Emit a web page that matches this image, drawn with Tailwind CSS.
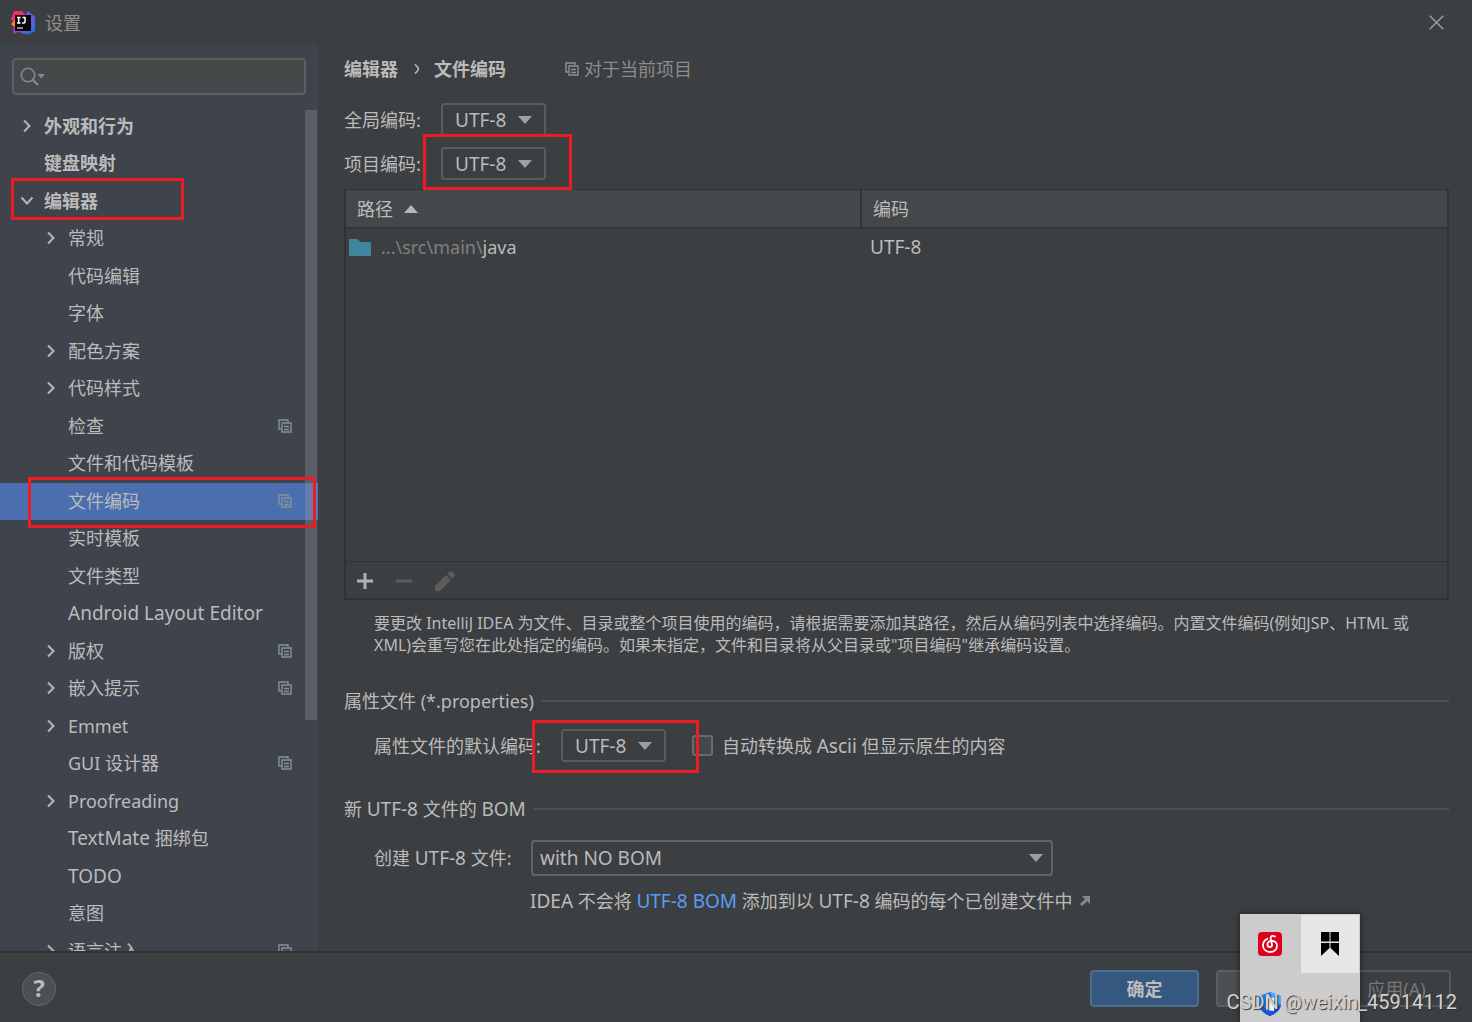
<!DOCTYPE html>
<html lang="zh-CN">
<head>
<meta charset="utf-8">
<title>设置</title>
<meta name="viewport" content="width=device-width, initial-scale=1">
<script src="https://cdn.jsdelivr.net/npm/@tailwindcss/browser@4"></script>
</head>
<body class="flex h-screen flex-col overflow-hidden bg-[#3c3f41] font-['Noto_Sans','Noto_Sans_CJK_SC',sans-serif] text-[18px] leading-6 text-[#bbbbbb]">

<svg class="hidden" aria-hidden="true">
  <symbol id="copy" viewBox="0 0 14 14"><path d="M10 3V1H1v9h2M4 4h9v9H4zM6 7.500h5M6 10.500h5" fill="none" stroke="currentColor" stroke-width="1.400"/></symbol>
  <symbol id="right" viewBox="0 0 10 14"><path d="M2 1.500 7.500 7 2 12.500" fill="none" stroke="#b4b8bb" stroke-width="2"/></symbol>
  <symbol id="down" viewBox="0 0 14 8"><path d="M0 0H14L7 8Z" fill="#9da0a3"/></symbol>
</svg>

<header class="flex h-[43px] shrink-0 items-center pt-0.5 pr-7 pl-[11px]">
  <svg class="h-6 w-6" viewBox="0 0 24 24" aria-hidden="true">
    <defs>
      <linearGradient id="ga" x1="0" y1="0" x2="1" y2="1"><stop offset="0" stop-color="#fe2857"/><stop offset="1" stop-color="#e0338c"/></linearGradient>
      <linearGradient id="gb" x1="0" y1="0" x2="1" y2="1"><stop offset="0" stop-color="#2f6df5"/><stop offset=".5" stop-color="#7a52d8"/><stop offset="1" stop-color="#087cfa"/></linearGradient>
    </defs>
    <path d="M3 0H11L15 5V14H4L0 8Z" fill="url(#ga)"/>
    <path d="M0 13 4 9V17Z" fill="#fc801d"/>
    <path d="M3 15 12 19 2 23Z" fill="#b13bc4"/>
    <path d="M17 0 24 6V20L17 23.500 10 22 7 19 14 4Z" fill="url(#gb)"/>
    <rect x="4" y="4" width="16" height="16" fill="#080808"/>
    <path d="M6 6.500H9.500M7.700 6.500V12M6 12H9.500M11.500 6.500H14V11Q14 12 12.800 12H11" stroke="#fff" stroke-width="1.500" fill="none"/>
    <path d="M6 17H12" stroke="#ccc" stroke-width="1.300"/>
  </svg>
  <h1 class="ml-2.5 flex-1 text-[#8f8f8f]">设置</h1>
  <button aria-label="关闭"><svg class="h-[15px] w-[15px]" viewBox="0 0 15 15"><path d="M.7.700 14.300 14.300M14.300.700.700 14.300" stroke="#a0a0a0" stroke-width="1.400"/></svg></button>
</header>

<div class="flex min-h-0 flex-1">
  <aside class="relative flex w-[318px] shrink-0 flex-col overflow-hidden bg-[#3f434c] pt-[15px]">
    <div class="relative mr-3 ml-3">
      <svg class="absolute top-[9px] left-2 h-5 w-7" viewBox="0 0 28 20" aria-hidden="true"><circle cx="8" cy="8" r="6.700" fill="none" stroke="#7f8b91" stroke-width="1.600"/><path d="M12.500 12.500 18 18" stroke="#7f8b91" stroke-width="2.200"/><path d="M17.500 7H25L21.200 11.500Z" fill="#7f8b91"/></svg>
      <input type="text" aria-label="搜索" class="block h-[37px] w-full rounded-[4px] border-2 border-[#5c6062] bg-[#454949] pr-2 pl-10 outline-none">
    </div>
    <ul class="mt-[13px] min-h-0 flex-1 overflow-hidden [&>li]:pb-0.5">
      <li class="flex items-center pl-[22px] font-bold odd:h-[37px] even:h-[38px]"><svg class="mr-3 h-3.5 w-2.5"><use href="#right"/></svg>外观和行为</li>
      <li class="flex items-center pl-11 font-bold odd:h-[37px] even:h-[38px]">键盘映射</li>
      <li class="relative flex items-center pl-5 font-bold odd:h-[37px] even:h-[38px]"><svg class="mr-2.5 h-2.5 w-3.5" viewBox="0 0 14 10"><path d="M1.500 1.500 7 7.500 12.500 1.500" fill="none" stroke="#b4b8bb" stroke-width="2"/></svg>编辑器<span class="absolute -top-[5px] left-[11px] h-[42px] w-[173px] border-3 border-[#ed1c24]"></span></li>
      <li class="flex items-center pl-[46px] odd:h-[37px] even:h-[38px]"><svg class="mr-3 h-3.5 w-2.5"><use href="#right"/></svg>常规</li>
      <li class="flex items-center pl-[68px] odd:h-[37px] even:h-[38px]">代码编辑</li>
      <li class="flex items-center pl-[68px] odd:h-[37px] even:h-[38px]">字体</li>
      <li class="flex items-center pl-[46px] odd:h-[37px] even:h-[38px]"><svg class="mr-3 h-3.5 w-2.5"><use href="#right"/></svg>配色方案</li>
      <li class="flex items-center pl-[46px] odd:h-[37px] even:h-[38px]"><svg class="mr-3 h-3.5 w-2.5"><use href="#right"/></svg>代码样式</li>
      <li class="flex items-center pr-[26px] pl-[68px] odd:h-[37px] even:h-[38px]">检查<svg class="ml-auto h-3.5 w-3.5 text-[#87939a]"><use href="#copy"/></svg></li>
      <li class="flex items-center pl-[68px] odd:h-[37px] even:h-[38px]">文件和代码模板</li>
      <li class="relative flex items-center bg-[#4b6eaf] pr-[26px] pl-[68px] odd:h-[37px] even:h-[38px]">文件编码<svg class="ml-auto h-3.5 w-3.5 text-[#87939a]"><use href="#copy"/></svg><span class="absolute -top-1.5 left-7 z-10 h-[51px] w-[288px] border-3 border-[#ed1c24]"></span></li>
      <li class="flex items-center pl-[68px] odd:h-[37px] even:h-[38px]">实时模板</li>
      <li class="flex items-center pl-[68px] odd:h-[37px] even:h-[38px]">文件类型</li>
      <li class="flex items-center pl-[68px] text-[19px] odd:h-[37px] even:h-[38px]">Android Layout Editor</li>
      <li class="flex items-center pr-[26px] pl-[46px] odd:h-[37px] even:h-[38px]"><svg class="mr-3 h-3.5 w-2.5"><use href="#right"/></svg>版权<svg class="ml-auto h-3.5 w-3.5 text-[#87939a]"><use href="#copy"/></svg></li>
      <li class="flex items-center pr-[26px] pl-[46px] odd:h-[37px] even:h-[38px]"><svg class="mr-3 h-3.5 w-2.5"><use href="#right"/></svg>嵌入提示<svg class="ml-auto h-3.5 w-3.5 text-[#87939a]"><use href="#copy"/></svg></li>
      <li class="flex items-center pl-[46px] odd:h-[37px] even:h-[38px]"><svg class="mr-3 h-3.5 w-2.5"><use href="#right"/></svg>Emmet</li>
      <li class="flex items-center pr-[26px] pl-[68px] odd:h-[37px] even:h-[38px]">GUI 设计器<svg class="ml-auto h-3.5 w-3.5 text-[#87939a]"><use href="#copy"/></svg></li>
      <li class="flex items-center pl-[46px] odd:h-[37px] even:h-[38px]"><svg class="mr-3 h-3.5 w-2.5"><use href="#right"/></svg>Proofreading</li>
      <li class="flex items-center pl-[68px] odd:h-[37px] even:h-[38px]"><span><span class="text-[19px]">TextMate</span> 捆绑包</span></li>
      <li class="flex items-center pl-[68px] text-[19px] odd:h-[37px] even:h-[38px]">TODO</li>
      <li class="flex items-center pl-[68px] odd:h-[37px] even:h-[38px]">意图</li>
      <li class="flex items-center pr-[26px] pl-[46px] odd:h-[37px] even:h-[38px]"><svg class="mr-3 h-3.5 w-2.5"><use href="#right"/></svg>语言注入<svg class="ml-auto h-3.5 w-3.5 text-[#87939a]"><use href="#copy"/></svg></li>
    </ul>
    <div class="absolute top-[67px] right-px h-[610px] w-3 bg-[#a6a6a6]/28"></div>
  </aside>

  <main class="flex min-w-0 flex-1 flex-col pt-3.5 pr-[23px] pb-[38px] pl-[26px]">
    <nav class="flex h-6 items-center" aria-label="位置">
      <span class="font-bold">编辑器</span>
      <svg class="mr-3.5 ml-4 h-2.5 w-1.5" viewBox="0 0 6 10"><path d="M1 .5Q4 3 4.500 5 4 7 1 9.500" fill="none" stroke="#bbb" stroke-width="1.500"/></svg>
      <span class="font-bold">文件编码</span>
      <svg class="ml-[59px] h-3.5 w-3.5 text-[#87939a]"><use href="#copy"/></svg>
      <span class="ml-[5px] text-[#8c8c8c]">对于当前项目</span>
    </nav>

    <div class="mt-[22px] flex h-[33px] items-center">
      <label for="global" class="w-[97px]">全局编码:</label>
      <div class="relative">
        <select id="global" class="block h-[33px] w-[105px] appearance-none rounded-[4px] border-2 border-[#5a5d5f] bg-transparent pl-3 text-[19px]"><option>UTF-8</option></select>
        <svg class="pointer-events-none absolute top-[13px] right-3.5 h-2 w-3.5"><use href="#down"/></svg>
      </div>
    </div>
    <div class="mt-[11px] flex h-[33px] items-center">
      <label for="project" class="w-[97px]">项目编码:</label>
      <div class="relative">
        <select id="project" class="block h-[33px] w-[105px] appearance-none rounded-[4px] border-2 border-[#5a5d5f] bg-transparent pl-3 text-[19px]"><option>UTF-8</option></select>
        <svg class="pointer-events-none absolute top-[13px] right-3.5 h-2 w-3.5"><use href="#down"/></svg>
        <span class="pointer-events-none absolute -top-[13px] -left-[18px] z-10 h-14 w-[149px] border-3 border-[#ed1c24]"></span>
      </div>
    </div>

    <section class="mt-[9px] flex min-h-0 flex-1 flex-col border-2 border-t border-[#323232]">
      <div class="min-h-0 flex-1">
        <table class="w-full table-fixed">
          <thead>
            <tr class="h-[38px] border-b-2 border-[#323537] bg-[#45484a] text-left">
              <th class="w-[515px] border-r-2 border-[#323537] pl-[11px] font-normal"><span class="flex items-center">路径<svg class="ml-[11px] h-2 w-3.5" viewBox="0 0 14 8"><path d="M7 0 14 8H0Z" fill="#b4b6b8"/></svg></span></th>
              <th class="pl-[11px] font-normal">编码</th>
            </tr>
          </thead>
          <tbody>
            <tr class="h-[37px]">
              <td class="pl-[3px]"><span class="flex items-center"><svg class="mr-2.5 h-[17px] w-[22px]" viewBox="0 0 22 17"><path d="M0 0H8L12 3H22V17H0Z" fill="#3e86a0"/></svg><span class="text-[#808080]">...\src\main\</span>java</span></td>
              <td class="pl-[9px] text-[19px]">UTF-8</td>
            </tr>
          </tbody>
        </table>
      </div>
      <div class="flex h-[37px] items-center gap-[23px] border-t border-[#323232] pt-px pl-[11px]">
        <button aria-label="添加"><svg class="h-4 w-4" viewBox="0 0 16 16"><path d="M8 0V16M0 8H16" stroke="#afb1b3" stroke-width="3"/></svg></button>
        <button aria-label="移除" disabled><svg class="h-4 w-4" viewBox="0 0 16 16"><path d="M0 8H16" stroke="#5a5c5e" stroke-width="3"/></svg></button>
        <button aria-label="编辑" disabled><svg class="h-5 w-5" viewBox="0 0 20 20"><path d="M0 20V15L11 4 16 9 5 20ZM12.300 2.700 14 1Q16 -.6 18 1.500L19 2.500Q20.500 4 19 6L17.300 7.700Z" fill="#5c5c5c"/></svg></button>
      </div>
    </section>

    <p class="mt-3 pl-[30px] text-[16px] leading-[22px]">要更改 IntelliJ IDEA 为文件、目录或整个项目使用的编码，请根据需要添加其路径，然后从编码列表中选择编码。内置文件编码(例如JSP、HTML 或<br>XML)会重写您在此处指定的编码。如果未指定，文件和目录将从父目录或"项目编码"继承编码设置。</p>

    <h2 class="mt-[33px] flex h-6 items-center gap-2">属性文件 (*.properties)<span class="h-0.5 flex-1 bg-[#515151]"></span></h2>
    <div class="mt-4 flex h-[33px] items-center pl-[30px]">
      <label for="props" class="w-[187px]">属性文件的默认编码:</label>
      <div class="relative">
        <select id="props" class="block h-[33px] w-[105px] appearance-none rounded-[4px] border-2 border-[#5a5d5f] bg-transparent pl-3 text-[19px]"><option>UTF-8</option></select>
        <svg class="pointer-events-none absolute top-[13px] right-3.5 h-2 w-3.5"><use href="#down"/></svg>
        <span class="pointer-events-none absolute -top-[9px] -left-[29px] z-10 h-[53px] w-[167px] border-3 border-[#ed1c24]"></span>
      </div>
      <input id="ascii" type="checkbox" class="ml-[26px] h-[21px] w-[21px] appearance-none rounded-[3px] border-2 border-[#6b6b6b] bg-[#43494a]">
      <label for="ascii" class="ml-[9px]">自动转换成 <span class="text-[19px]">Ascii</span> 但显示原生的内容</label>
    </div>

    <h2 class="mt-[35px] flex h-6 items-center gap-2"><span>新 <span class="text-[19px]">UTF-8</span> 文件的 <span class="text-[19px]">BOM</span></span><span class="h-0.5 flex-1 bg-[#515151]"></span></h2>
    <div class="mt-[19px] flex h-9 items-center pl-[30px]">
      <label for="bom" class="w-[157px]">创建 <span class="text-[19px]">UTF-8</span> 文件:</label>
      <div class="relative">
        <select id="bom" class="block h-9 w-[522px] appearance-none rounded-[4px] border-2 border-[#646464] bg-transparent pl-[7px] text-[19px]"><option>with NO BOM</option></select>
        <svg class="pointer-events-none absolute top-3.5 right-2.5 h-2 w-3.5"><use href="#down"/></svg>
      </div>
    </div>
    <p class="mt-[13px] flex h-6 items-center pl-[186px]"><span><span class="text-[19px]">IDEA</span> 不会将 <a href="#" class="text-[19px] text-[#589df6]">UTF-8 BOM</a> 添加到以 <span class="text-[19px]">UTF-8</span> 编码的每个已创建文件中</span><svg class="ml-2 h-2.5 w-2.5" viewBox="0 0 10 10"><path d="M2 0H10V8L7.300 5.300 2 10 0 8 5 3Z" fill="#7f8b91"/></svg></p>
  </main>
</div>

<footer class="relative flex h-[71px] shrink-0 items-center border-t-2 border-[#323232] pt-0.5 pr-[21px] pl-[22px]">
  <button aria-label="帮助" class="flex h-[34px] w-[34px] items-center justify-center rounded-full border border-[#65686a] bg-[#4c5052] pb-0.5 text-[24px] font-bold">?</button>
  <div class="ml-auto flex gap-[17px]">
    <button class="h-[37px] w-[109px] rounded-[4px] border-2 border-[#4c708c] bg-[#365880] font-bold">确定</button>
    <button aria-label="取消" class="h-[37px] w-[109px] rounded-[4px] border-2 border-[#5e6060] bg-[#4c5052]"></button>
    <button disabled class="h-[37px] w-[109px] rounded-[4px] border-2 border-[#55585a] text-[#777777]">应用(A)</button>
  </div>
  <div class="absolute right-28 bottom-0 grid h-[108px] w-[120px] grid-cols-2 grid-rows-[60px_60px] overflow-hidden bg-[#cccccc] shadow-[0_0_6px_1px_#00000066]">
    <span class="flex items-center justify-center">
      <svg class="h-6 w-6" viewBox="0 0 24 24"><rect width="24" height="24" rx="4" fill="#dd001b"/><path d="M17 4.500C14.500 3 12.300 4.200 12.700 6.500L14 12.500C14.300 15.500 10 16 9.500 13 9.200 10.500 11 9 13 8.800 17 8.500 19 11 19 13.500 19 17.500 16 20 12 20 8 20 5 17.200 5 13.500 5 10.500 6.500 8 9.300 6.800" fill="none" stroke="#fff" stroke-width="1.800" stroke-linecap="round"/></svg>
    </span>
    <span class="m-px flex items-center justify-center bg-[#e6e6e6]">
      <svg class="h-6 w-[18px]" viewBox="0 0 18 24"><path d="M0 0H8.500V9.500H0ZM9.500 0H18V9.500H9.500ZM0 11H8.500V16L0 24ZM9.500 11H18V24L9.500 16Z" fill="#000"/></svg>
    </span>
    <span class="flex items-center justify-center">
      <svg class="h-6 w-[22px]" viewBox="0 0 22 24"><path d="M11 0 22 4V13Q21 20 11 24 1 20 0 13V4Z" fill="#1e7bf0"/><path d="M11 0 22 4V13L14 8Z" fill="#48a8ff"/><path d="M0 13Q1 20 11 24 21 20 22 13L11 18Z" fill="#1452d6"/><path d="M7 5 15 6V19L7 18Z" fill="#f2f6ff"/></svg>
    </span>
  </div>
  <span class="absolute right-[15px] bottom-2 font-['Roboto',sans-serif] text-[20px] whitespace-nowrap text-[#d2d2d2] [text-shadow:1px_1px_1px_#333]">CSDN @weixin_45914112</span>
</footer>
</body>
</html>
